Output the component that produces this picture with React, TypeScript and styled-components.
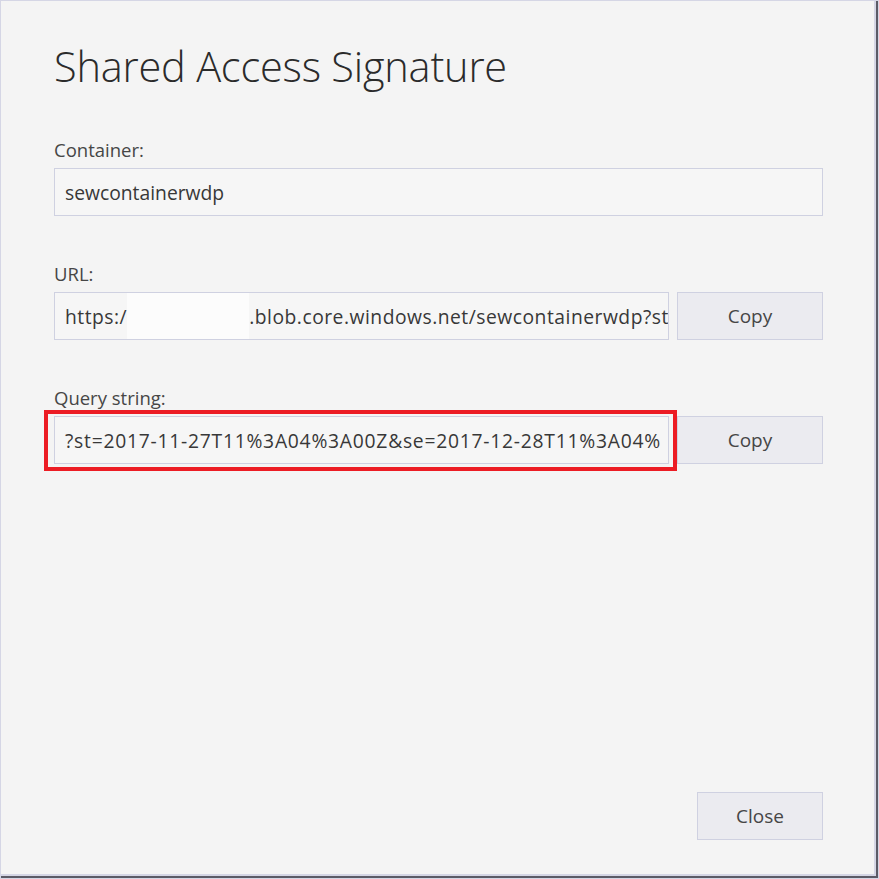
import styled, { createGlobalStyle } from "styled-components";

const GlobalStyle = createGlobalStyle`
  html, body {
    margin: 0;
    padding: 0;
    background: #f3f3f3;
  }
  * {
    box-sizing: border-box;
  }
`;

const FONT = `"Open Sans", "Noto Sans", "Liberation Sans", sans-serif`;

const Frame = styled.div`
  width: 879px;
  height: 879px;
  border: 1px solid #d5d6e5;
  background: #f4f4f4;
`;

const Dialog = styled.div`
  height: 100%;
  display: flex;
  flex-direction: column;
  padding: 38px 53px 36px 53px;
  border-right: 2px solid #5b5b66;
  border-bottom: 2px solid #5b5b66;
  box-shadow: inset -2px -2px 0 #d5d6e5;
  font-family: ${FONT};
  color: #333;
`;

const Title = styled.h1`
  margin: 0 0 45px 0;
  font-size: 41.5px;
  font-weight: 300;
  line-height: 54px;
  color: #2b2b2b;
  letter-spacing: -0.2px;
`;

const Section = styled.div`
  display: flex;
  flex-direction: column;
  margin-bottom: 46px;
`;

const Label = styled.label`
  font-size: 18.5px;
  line-height: 24px;
  color: #464646;
  margin-bottom: 6px;
`;

const Row = styled.div`
  display: flex;
  gap: 8px;
`;

const FieldWrap = styled.div<{ $highlight?: boolean }>`
  position: relative;
  flex: 1;
  min-width: 0;

  ${({ $highlight }) =>
    $highlight &&
    `
    &::after {
      content: "";
      position: absolute;
      left: -10px;
      top: -6px;
      right: -8px;
      bottom: -7px;
      border: 4px solid #ec1c24;
      pointer-events: none;
    }
  `}
`;

const Field = styled.div<{ $spacing?: number }>`
  display: flex;
  align-items: center;
  height: 48px;
  padding: 0 0 0 10px;
  border: 1px solid #cfd1e1;
  background: #f6f6f6;
  font-size: 19.3px;
  letter-spacing: ${({ $spacing = 0 }) => $spacing}px;
  color: #383838;
  white-space: nowrap;
  overflow: hidden;
`;

const Redacted = styled.span<{ $width: number }>`
  flex: none;
  align-self: stretch;
  width: ${({ $width }) => $width}px;
  margin-bottom: -1px;
  background: #fcfcfc;
`;

const Button = styled.button<{ $width: number }>`
  flex: none;
  width: ${({ $width }) => $width}px;
  height: 48px;
  border: 1px solid #cfd1e1;
  background: #ebebf0;
  font-family: ${FONT};
  font-size: 19px;
  color: #464646;
  cursor: pointer;
`;

const Footer = styled.div`
  margin-top: auto;
  display: flex;
  justify-content: flex-end;
`;

const App = (): JSX.Element => {
  return (
    <>
      <GlobalStyle />
      <Frame>
        <Dialog>
          <Title>Shared Access Signature</Title>

          <Section>
            <Label>Container:</Label>
            <Field>sewcontainerwdp</Field>
          </Section>

          <Section>
            <Label>URL:</Label>
            <Row>
              <FieldWrap>
                <Field $spacing={0.5}>
                  <span>https:/</span>
                  <Redacted $width={122} />
                  <span>.blob.core.windows.net/sewcontainerwdp?st=</span>
                </Field>
              </FieldWrap>
              <Button $width={146}>Copy</Button>
            </Row>
          </Section>

          <Section>
            <Label>Query string:</Label>
            <Row>
              <FieldWrap $highlight>
                <Field $spacing={0.75}>?st=2017-11-27T11%3A04%3A00Z&amp;se=2017-12-28T11%3A04%</Field>
              </FieldWrap>
              <Button $width={146}>Copy</Button>
            </Row>
          </Section>

          <Footer>
            <Button $width={126}>Close</Button>
          </Footer>
        </Dialog>
      </Frame>
    </>
  );
};

export default App;
